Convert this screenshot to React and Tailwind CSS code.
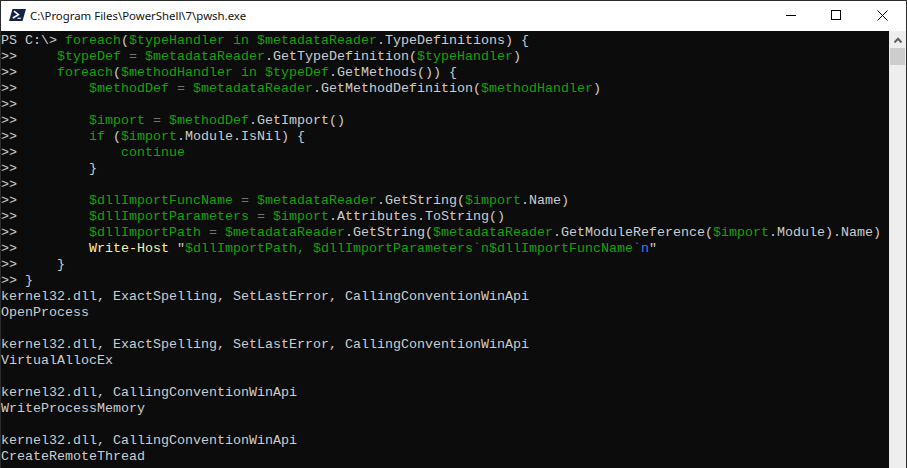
import React from "react";

const colors = {
  g: "text-[#13a10e]",
  w: "text-[#cccccc]",
  y: "text-[#f9f1a5]",
  d: "text-[#767676]",
  b: "text-[#3b78ff]",
};

const prompt = ["w", ">> "];

const lines = [
  [["w", "PS C:\\> "], ["g", "foreach"], ["w", "("], ["g", "$typeHandler in $metadataReader"], ["w", ".TypeDefinitions) {"]],
  [prompt, ["w", "    "], ["g", "$typeDef"], ["d", " = "], ["g", "$metadataReader"], ["w", ".GetTypeDefinition("], ["g", "$typeHandler"], ["w", ")"]],
  [prompt, ["w", "    "], ["g", "foreach"], ["w", "("], ["g", "$methodHandler in $typeDef"], ["w", ".GetMethods()) {"]],
  [prompt, ["w", "        "], ["g", "$methodDef"], ["d", " = "], ["g", "$metadataReader"], ["w", ".GetMethodDefinition("], ["g", "$methodHandler"], ["w", ")"]],
  [prompt],
  [prompt, ["w", "        "], ["g", "$import"], ["d", " = "], ["g", "$methodDef"], ["w", ".GetImport()"]],
  [prompt, ["w", "        "], ["g", "if"], ["w", " ("], ["g", "$import"], ["w", ".Module.IsNil) {"]],
  [prompt, ["w", "            "], ["g", "continue"]],
  [prompt, ["w", "        }"]],
  [prompt],
  [prompt, ["w", "        "], ["g", "$dllImportFuncName"], ["d", " = "], ["g", "$metadataReader"], ["w", ".GetString("], ["g", "$import"], ["w", ".Name)"]],
  [prompt, ["w", "        "], ["g", "$dllImportParameters"], ["d", " = "], ["g", "$import"], ["w", ".Attributes.ToString()"]],
  [prompt, ["w", "        "], ["g", "$dllImportPath"], ["d", " = "], ["g", "$metadataReader"], ["w", ".GetString("], ["g", "$metadataReader"], ["w", ".GetModuleReference("], ["g", "$import"], ["w", ".Module).Name)"]],
  [prompt, ["w", "        "], ["y", "Write-Host"], ["w", ' "'], ["g", "$dllImportPath, $dllImportParameters`n$dllImportFuncName"], ["b", "`n"], ["w", '"']],
  [prompt, ["w", "    }"]],
  [prompt, ["w", "}"]],
  [["w", "kernel32.dll, ExactSpelling, SetLastError, CallingConventionWinApi"]],
  [["w", "OpenProcess"]],
  [],
  [["w", "kernel32.dll, ExactSpelling, SetLastError, CallingConventionWinApi"]],
  [["w", "VirtualAllocEx"]],
  [],
  [["w", "kernel32.dll, CallingConventionWinApi"]],
  [["w", "WriteProcessMemory"]],
  [],
  [["w", "kernel32.dll, CallingConventionWinApi"]],
  [["w", "CreateRemoteThread"]],
];

const App = () => {
  return (
    <div className="flex flex-col h-[468px] w-[907px] overflow-hidden border-x border-t border-[#2b2b2b] bg-white">
      {/* Title bar */}
      <div className="flex items-center h-[30px] shrink-0 bg-white">
        <svg width="17" height="12" viewBox="0 0 17 12" className="ml-2 mb-[2px] shrink-0">
          <path d="M3.5 0H17L13.5 12H0Z" fill="#14233f" />
          <path d="M5 2.2L9.5 5.6L3.8 9" fill="none" stroke="#ffffff" strokeWidth="1.5" />
          <path d="M8.5 9.3H12" stroke="#dfe6ef" strokeWidth="1.2" />
        </svg>
        <span className="ml-[4px] text-[11.4px] text-[#111111] font-['Noto_Sans',sans-serif]">
          C:\Program Files\PowerShell\7\pwsh.exe
        </span>
        <div className="ml-auto flex items-center mr-[18px] mb-[2px] gap-[35px]">
          <div className="w-[10px] h-px bg-black" />
          <div className="w-[10px] h-[10px] border border-black" />
          <svg width="11" height="11" viewBox="0 0 11 11" className="ml-px">
            <path d="M0.5 0.5L10.5 10.5M10.5 0.5L0.5 10.5" stroke="#000000" strokeWidth="1" />
          </svg>
        </div>
      </div>

      <div className="flex flex-1 min-h-0">
        {/* Console output */}
        <div className="flex-1 pt-[2px] bg-[#0c0c0c] font-['Liberation_Mono',monospace] text-[13.33px] leading-4 whitespace-pre overflow-hidden">
          {lines.map((line, i) => (
            <div key={i} className="h-4">
              {line.map(([c, text], j) => (
                <span key={j} className={colors[c]}>
                  {text}
                </span>
              ))}
            </div>
          ))}
        </div>

        {/* Scrollbar */}
        <div className="flex flex-col items-center w-[17px] shrink-0 bg-[#eeeeee]">
          <div className="flex items-center justify-center h-[17px] w-full">
            <svg width="8" height="6" viewBox="0 0 8 6">
              <path d="M0.5 5.5L4 1.8L7.5 5.5" fill="none" stroke="#606060" strokeWidth="2" />
            </svg>
          </div>
          <div className="w-[15px] h-[17px] bg-[#cdcdcd]" />
        </div>
      </div>
    </div>
  );
};

export default App;
